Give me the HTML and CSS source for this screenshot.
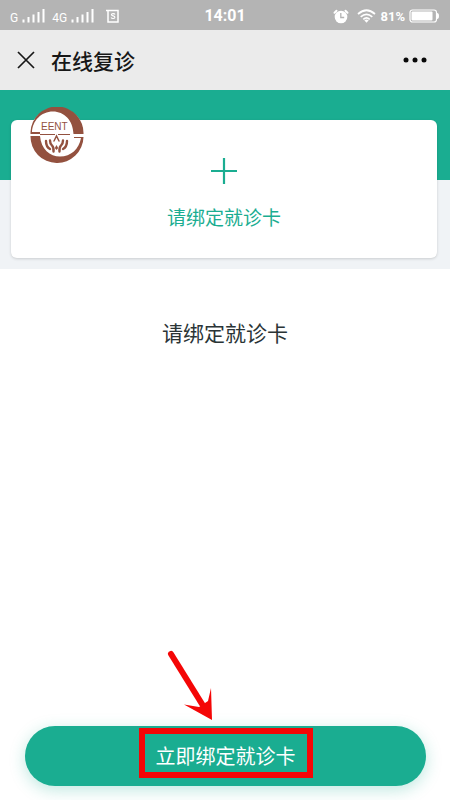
FILE: index.html
```html
<!DOCTYPE html>
<html lang="zh-CN">
<head>
<meta charset="utf-8">
<meta name="viewport" content="width=device-width, initial-scale=1">
<title>在线复诊</title>
<link rel="stylesheet" href="styles.css">
</head>
<body>
<div class="status">
  <div class="status-left">
    <span class="network">G</span>
    <svg class="signal" width="23" height="14" viewBox="0 0 23 14" aria-hidden="true"><path d="M1.500 10.500v3M6.500 8v5.500M11.500 5.500v8M16.500 3v10.500M21.500 0v13.500"/></svg>
    <span class="network network-4g">4G</span>
    <svg class="signal" width="23" height="14" viewBox="0 0 23 14" aria-hidden="true"><path d="M1.500 10.500v3M6.500 8v5.500M11.500 5.500v8M16.500 3v10.500M21.500 0v13.500"/></svg>
    <svg class="sim" width="13" height="14" viewBox="0 0 13 14" aria-hidden="true"><path d="M0 1.500H12V13H2V1.500"/><path d="M9 5.500C8.500 4.300 5.300 4.300 5.400 5.800c.1 1.400 3.500.8 3.500 2.400 0 1.700-3.200 1.700-3.800.4" stroke-width="1.100"/></svg>
  </div>
  <time class="clock">14:01</time>
  <div class="status-right">
    <svg width="16" height="15" viewBox="0 0 16 15" aria-hidden="true"><circle cx="8" cy="8" r="6.300" fill="#fff"/><path d="M1.500 3.700 3.500 1.800M14.500 3.700 12.500 1.800" stroke="#fff" stroke-width="2" stroke-linecap="round"/><path d="M7.800 4v4.500h3.400" fill="none" stroke="#b4b4b4" stroke-width="1.300"/></svg>
    <svg class="wifi" width="19" height="14" viewBox="0 0 19 14" aria-hidden="true"><path d="M1 5Q9.500-2.500 18 5M3.700 7.800Q9.500 2.800 15.300 7.800M6.300 10.300Q9.500 7.500 12.700 10.300" fill="none" stroke="#fff" stroke-width="1.700"/><path d="m7.300 11.300 2.200 2.500 2.200-2.500Q9.500 9.700 7.300 11.300" fill="#fff"/></svg>
    <span class="percent">81%</span>
    <svg width="31" height="14" viewBox="0 0 31 14" aria-hidden="true"><rect x="1" y="1" width="26.500" height="12" rx="2.500" fill="none" stroke="#fff" stroke-width="1.200"/><rect x="2.500" y="2.500" width="21" height="9" rx="1" fill="#fff"/><path d="M28 4q2 0 2 3t-2 3" fill="#fff"/></svg>
  </div>
</div>
<header class="nav">
  <button class="icon-button" type="button" aria-label="关闭"><svg width="18" height="18" viewBox="0 0 18 18"><path d="m1 1 16 16M17 1 1 17" stroke="#171717" stroke-width="1.700"/></svg></button>
  <h1>在线复诊</h1>
  <button class="icon-button more" type="button" aria-label="更多"><svg width="24" height="6" viewBox="0 0 24 6"><g fill="#080808"><circle cx="3" cy="3" r="2.500"/><circle cx="12" cy="3" r="2.500"/><circle cx="21" cy="3" r="2.500"/></g></svg></button>
</header>
<main>
  <section class="hero">
    <div class="card">
      <svg class="logo" width="56" height="56" viewBox="0 0 56 56" role="img" aria-label="EENT">
        <circle cx="28" cy="28" r="27.500" fill="#fff"/>
        <path d="M1.500 25A26.500 26.500 0 0 1 54.500 27H44.500C44 13 35 4.500 24 4.500 12 4.500 3.500 14 3 25h8v2H1.500z" fill="#93513f"/>
        <path d="M1.500 29h9.500C12 42 21 49.500 31 49.500 42 49.500 50 42 52 31h-7v-1h9.500A26.500 26.500 0 0 1 1.500 29z" fill="#93513f"/>
        <path d="M11 27.500h15M29 27.500h12" stroke="#93513f" stroke-width="1"/>
        <text class="logo-text" x="12" y="23">EENT</text>
        <g fill="none" stroke="#93513f" stroke-linecap="round"><path d="m25 34 2.500-5 2.500 5" stroke-width="1.500"/><path d="M17 34q0 6 4 8M38 34q0 6-4 8" stroke-width="2.400"/><path d="M21 33.500q0 3 2 5t1.500 6M34 33.500q0 3-2 5t-1.500 6" stroke-width="2.400"/></g>
        <path d="m27.500 38 1.700 3-1.700 2-1.700-2z" fill="#93513f"/>
      </svg>
      <button class="bind-card" type="button">
        <svg width="28" height="28" viewBox="0 0 28 28" aria-hidden="true"><path d="M14 1v26M1 14h26" stroke="#1aad91" stroke-width="2.200"/></svg>
        <span>请绑定就诊卡</span>
      </button>
    </div>
  </section>
  <p class="message">请绑定就诊卡</p>
</main>
<footer>
  <button class="submit" type="button">
    <span class="highlight">立即绑定就诊卡
      <svg class="arrow" width="48" height="70" viewBox="0 0 48 70" aria-hidden="true"><path d="m4 4 31 50" stroke="#f40606" stroke-width="6" stroke-linecap="round"/><path d="M45 70 17 54.500 32 57 41 51 44 38z" fill="#f40606"/></svg>
    </span>
  </button>
</footer>
</body>
</html>
```
FILE: styles.css
```css
* {
  box-sizing: border-box;
}

body {
  display: flex;
  flex-direction: column;
  min-height: 100vh;
  margin: 0;
  background: #fff;
  color: #2a3436;
  font-family: "Noto Sans CJK SC", sans-serif;
}

button {
  padding: 0;
  border: 0;
  background: none;
  font: inherit;
  cursor: pointer;
}

svg {
  display: block;
  flex: none;
}

.status {
  display: grid;
  grid-template-columns: 1fr auto 1fr;
  align-items: center;
  height: 30px;
  padding: 2px 10px 0;
  background: #b4b4b4;
  color: #fff;
  font-family: Roboto, sans-serif;
}

.status-left,
.status-right {
  display: flex;
  align-items: center;
}

.status-left {
  gap: 4px;
}

.status-right {
  justify-content: flex-end;
  gap: 4px;
}

.network {
  padding-top: 3px;
  font-size: 12px;
  line-height: 14px;
}

.network-4g {
  margin-left: 3px;
}

.signal {
  fill: none;
  stroke: #fff;
  stroke-width: 2;
}

.sim {
  margin-left: 8px;
  fill: none;
  stroke: #fff;
  stroke-width: 1.5;
}

.clock {
  font-size: 16px;
  font-weight: 700;
  line-height: 20px;
}

.wifi {
  margin-left: 4px;
}

.percent {
  font-size: 13px;
  font-weight: 700;
}

.nav {
  display: flex;
  align-items: center;
  gap: 16px;
  height: 60px;
  padding: 0 23px 0 17px;
  background: #ebebeb;
}

.nav h1 {
  margin: 0;
  color: #171717;
  font-size: 21px;
  font-weight: 500;
  line-height: 30px;
}

.icon-button {
  display: flex;
}

.more {
  margin-left: auto;
}

.hero {
  padding: 30px 13px 11px 11px;
  background: linear-gradient(#1aad91 90px, #f0f3f6 90px);
}

.card {
  position: relative;
  padding: 37px 16px 26px;
  border-radius: 6px;
  background: #fff;
  box-shadow: 0 1px 3px rgb(0 0 0 / 16%);
}

.logo {
  position: absolute;
  top: -13px;
  left: 18px;
}

.logo-text {
  fill: #93513f;
  font-family: "Liberation Sans", sans-serif;
  font-size: 10px;
}

.bind-card {
  display: flex;
  flex-direction: column;
  align-items: center;
  gap: 17px;
  width: 100%;
  color: #1aad91;
  font-size: 19px;
  line-height: 30px;
}

.message {
  margin: 48px 0 0;
  font-size: 21px;
  line-height: 30px;
  text-align: center;
}

footer {
  margin-top: auto;
  padding: 0 24px 14px 25px;
}

.submit {
  display: flex;
  align-items: flex-start;
  justify-content: center;
  width: 100%;
  height: 60px;
  padding-top: 2px;
  border-radius: 30px;
  background: #1aad91;
  box-shadow: 0 4px 16px rgb(26 173 145 / 28%);
  color: #fff;
}

.highlight {
  position: relative;
  padding: 6px 11px 0;
  border: 6px solid #f40606;
  font-size: 20px;
  line-height: 32px;
}

.arrow {
  position: absolute;
  bottom: 52px;
  left: 22px;
}
```
